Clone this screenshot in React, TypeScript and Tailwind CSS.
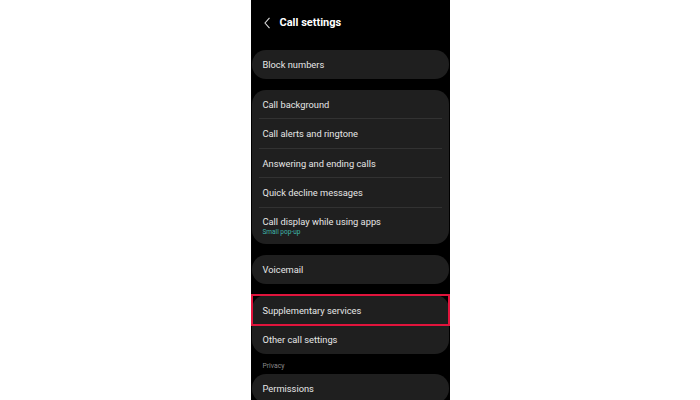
import React from 'react';

type Row = { label: string; sub?: string; h: string };

const mainRows: Row[] = [
  { label: 'Call background', h: 'h-[29px]' },
  { label: 'Call alerts and ringtone', h: 'h-[30px]' },
  { label: 'Answering and ending calls', h: 'h-[29px]' },
  { label: 'Quick decline messages', h: 'h-[30px]' },
  { label: 'Call display while using apps', sub: 'Small pop-up', h: 'h-[36px]' },
];

const Card: React.FC<{ children: React.ReactNode; className?: string }> = ({ children, className = '' }) => (
  <div className={`mx-px rounded-[14px] bg-[#1f1f1f] overflow-hidden ${className}`}>{children}</div>
);

const Item: React.FC<{ row: Row; divider?: boolean }> = ({ row, divider }) => (
  <div className={`relative flex flex-col justify-center px-[11px] ${row.h}`}>
    <span className="text-[9.3px] leading-[12px] text-[#e6e6e6]">{row.label}</span>
    {row.sub && <span className="text-[6.5px] leading-[9px] text-[#3fb5a9]">{row.sub}</span>}
    {divider && <div className="absolute bottom-0 left-[7px] right-[7px] h-px bg-[#323232]" />}
  </div>
);

export default function App() {
  return (
    <div className="w-[700px] h-[400px] bg-white flex justify-center overflow-hidden" style={{ fontFamily: 'Roboto, "Noto Sans", sans-serif' }}>
      <div className="w-[199px] h-full bg-black flex flex-col">
        {/* header */}
        <div className="h-[50px] flex items-start pt-[16px] pl-[13px] gap-[9px] shrink-0">
          <svg width="7" height="12" viewBox="0 0 7 12" className="mt-[1px]">
            <polyline points="5.5,0.8 1,6 5.5,11.2" fill="none" stroke="#d8d8d8" strokeWidth="1.1" />
          </svg>
          <span className="text-[11px] leading-[14px] font-bold text-white">Call settings</span>
        </div>

        <Card className="shrink-0">
          <Item row={{ label: 'Block numbers', h: 'h-[29px]' }} />
        </Card>

        <Card className="mt-[11px] shrink-0">
          {mainRows.map((r, i) => (
            <Item key={r.label} row={r} divider={i < mainRows.length - 1} />
          ))}
        </Card>

        <Card className="mt-[11px] shrink-0">
          <Item row={{ label: 'Voicemail', h: 'h-[29px]' }} />
        </Card>

        <Card className="mt-[11px] shrink-0 relative overflow-visible">
          <div className="relative">
            <Item row={{ label: 'Supplementary services', h: 'h-[31px]' }} />
            <div className="absolute -top-px -left-px -right-px h-[32px] border-2 border-[#e0143c]" />
          </div>
          <Item row={{ label: 'Other call settings', h: 'h-[28px]' }} />
        </Card>

        <div className="h-[20px] shrink-0 flex items-end pb-[3px] px-[12px]">
          <span className="text-[6.8px] leading-[9px] text-[#8a8a8a]">Privacy</span>
        </div>

        <Card className="shrink-0">
          <Item row={{ label: 'Permissions', h: 'h-[29px]' }} />
        </Card>
      </div>
    </div>
  );
}
